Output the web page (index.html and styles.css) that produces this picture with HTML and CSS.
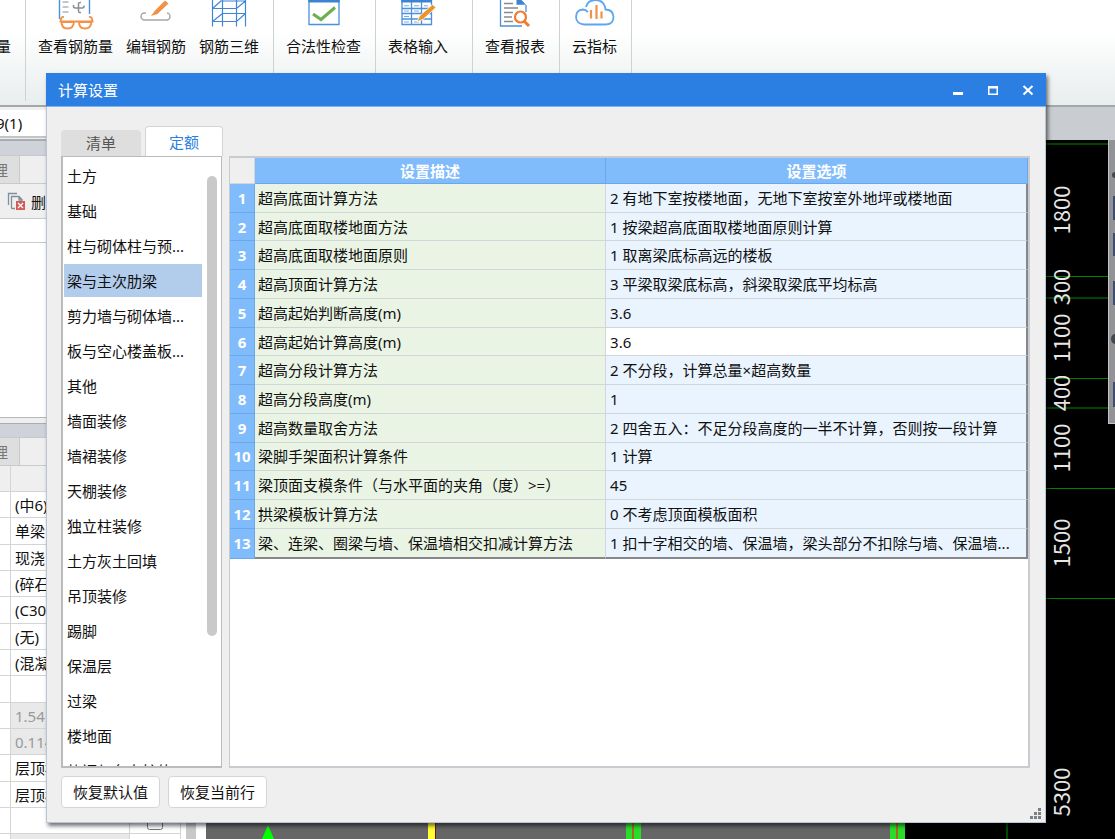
FILE: index.html
```html
<!DOCTYPE html>
<html lang="zh-CN">
<head>
<meta charset="utf-8">
<title>计算设置</title>
<link rel="stylesheet" href="styles.css">
</head>
<body>
<div class="app">
  <header class="ribbon">
    <div class="group group-first"><button class="tool"><span>量</span></button></div>
    <div class="group">
      <button class="tool">
        <svg class="tool-icon" viewBox="0 0 40 36" fill="none">
          <path d="M3.500 0V19M33.500 0V14" stroke="#4a90dd" stroke-width="1.400"/>
          <path d="M6.500 2h6M6.500 7h6M6.500 12h6" stroke="#888f96" stroke-width="1.200"/>
          <path d="M22.500 2.500V11q0 2 2.500 1.500M25 2.500q-2.500-.5-2.500 2M17.500 5v1.500q0 1.500 2 1.500h6.500q2 0 2-1.500V5.500" stroke="#888f96" stroke-width="1.500"/>
          <path d="M3.500 21.500h34M8 17q-3-1-3.500 4.500M33 17q3-1 3.500 4.500M5.500 22q0 6.500 6 6.500T18 22zM23 22q0 6.500 6 6.500T35.500 22z" stroke="#f2924a" stroke-width="1.900"/>
        </svg>
        <span>查看钢筋量</span>
      </button>
      <button class="tool">
        <svg class="tool-icon" viewBox="0 0 40 36" fill="none">
          <path d="M10 13H8.500a3.500 3.500 0 0 0 0 7H30a3.500 3.500 0 0 0 1-7" stroke="#a3a9ae" stroke-width="1.500"/>
          <path d="M15 16l3.500-5L29 .5l3.500 3L21.500 14z" fill="#f2924a"/>
        </svg>
        <span>编辑钢筋</span>
      </button>
      <button class="tool">
        <svg class="tool-icon" viewBox="0 0 40 36" fill="none" stroke="#3f86d6" stroke-width="1.200">
          <path d="M3.500 0V26.500M13.500 0V26.500M27.500 0V26.500M36.500 0V26.500M3.500 8.500H27.500L36.500 1M3.500 21.500H27.500L36.500 13.500M13.500 13.500H36.500M13.500 1H36.500M3.500 8.500l9-8M3.500 21.500l10-8"/>
        </svg>
        <span>钢筋三维</span>
      </button>
    </div>
    <div class="group">
      <button class="tool">
        <svg class="tool-icon" viewBox="0 0 40 36" fill="none">
          <path d="M5 0V24.500H35V0" stroke="#4a90dd" stroke-width="1.300"/>
          <path d="M4.300 0H35.700V2.500H4.300z" fill="#3f82cf"/>
          <path d="M9 14l8 5.500L31 7.500" stroke="#6fae4d" stroke-width="3"/>
        </svg>
        <span>合法性检查</span>
      </button>
    </div>
    <div class="group group-wide">
      <button class="tool">
        <svg class="tool-icon" viewBox="0 0 40 36" fill="none">
          <path d="M4 0V24.500H33.500V0M13.500 0V24M23.500 0V24M4 8.500H33M4 13.500H33M4 19H33" stroke="#4a90dd" stroke-width="1.300"/>
          <path d="M3.300 0H34V2.500H3.300z" fill="#3f82cf"/>
          <path d="M6 5.800h5M16 5.800h5M26 5.800h4M6 11h5M16 11h5M6 16.500h5M6 22h5M16 22h5" stroke="#78ade8"/>
          <path d="M19 22l2.500-6L34.500 4.500l3.500 3L25.500 19z" fill="#ef9227" stroke="#fff" stroke-width=".8"/>
        </svg>
        <span>表格输入</span>
      </button>
    </div>
    <div class="group">
      <button class="tool">
        <svg class="tool-icon" viewBox="0 0 40 36" fill="none">
          <path d="M5.500 0V26H27M31 5v7" stroke="#4a90dd" stroke-width="1.300"/>
          <path d="M21.500 0V4.800H31L26.500 0z" fill="#3f82cf"/>
          <path d="M9 3.500h9M9 8h14M9 12.500h9M9 17h8M9 21.500h9" stroke="#858b91" stroke-width="1.400"/>
          <circle cx="25.500" cy="17" r="5.500" fill="#fff" stroke="#f07a32" stroke-width="2.200"/>
          <path d="M29.500 21.500l4.500 4.500" stroke="#f07a32" stroke-width="3"/>
        </svg>
        <span>查看报表</span>
      </button>
    </div>
    <div class="group">
      <button class="tool">
        <svg class="tool-icon" viewBox="0 0 40 36" fill="none">
          <path d="M13 12Q10.500 9.500 8 9.500Q1 10 1 17Q1.500 24 9 24.500H31Q38.500 24 38.500 17Q38 9.500 30.500 9.500Q29.500 0 20.500 0Q13 0 11 7" stroke="#5ea6ee" stroke-width="1.800"/>
          <path d="M16 10v8.500M21.500 5v14M26.500 11.500v7" stroke="#f2924a" stroke-width="2.200"/>
        </svg>
        <span>云指标</span>
      </button>
    </div>
  </header>

  <div class="workspace">
    <aside class="side">
      <input class="combo" aria-label="构件" value="9(1)">
      <div class="band"></div>
      <div class="side-tabs"><button class="side-tab">理</button></div>
      <div class="side-tools">
        <button class="delete">
          <svg class="delete-icon" viewBox="0 0 20 20" fill="none">
            <path d="M1.500 13V1.500H10M4.500 16.500V4.500H12l3 3V9M4.500 16.500H8M12 4.500V8h3" stroke="#7f8f9b" stroke-width="1.300"/>
            <path d="M9 9h9v9H9z" fill="#d55a5a"/>
            <path d="M11 11l5 5M16 11l-5 5" stroke="#fff" stroke-width="1.200"/>
          </svg>
          <span>删</span>
        </button>
      </div>
      <div class="side-search"></div>
      <div class="side-tree"></div>
      <div class="band band-low"></div>
      <div class="side-tabs"><button class="side-tab">理</button></div>
      <div class="props">
        <div class="props-scroll">
        <table class="props-table">
          <colgroup><col class="p-mark"><col class="p-value"><col class="p-flag"></colgroup>
          <tr class="props-head"><td></td><td></td><td></td></tr>
          <tr><td></td><td>(中6)</td><td></td></tr>
          <tr><td></td><td>单梁</td><td></td></tr>
          <tr><td></td><td>现浇</td><td></td></tr>
          <tr><td></td><td>(碎石</td><td></td></tr>
          <tr><td></td><td>(C30</td><td></td></tr>
          <tr><td></td><td>(无)</td><td></td></tr>
          <tr><td></td><td>(混凝</td><td></td></tr>
          <tr><td></td><td></td><td></td></tr>
          <tr><td></td><td class="off">1.54</td><td></td></tr>
          <tr><td></td><td class="off">0.114</td><td></td></tr>
          <tr><td></td><td>层顶标</td><td></td></tr>
          <tr><td></td><td>层顶标</td><td></td></tr>
          <tr><td></td><td></td><td class="flag"><input type="checkbox" aria-label="附加"></td></tr>
          <tr><td></td><td class="off"></td><td></td></tr>
        </table>
        </div>
        <div class="props-bar"></div>
      </div>
    </aside>

    <main class="view">
      <div class="view-head"></div>
      <div class="canvas">
        <svg class="plan" width="910" height="16">
          <path d="M0 0H684V16H0z" fill="#666"/>
          <path d="M62 2l6 14H56z" fill="#00ff00"/>
          <path d="M222 0h7v16h-7z" fill="#ffff33"/><path d="M229 0h1v16h-1z" fill="#7a1010"/>
          <path d="M420 0h15v16h-15zM684 0h15v16h-15z" fill="#2bdc2b"/>
          <path d="M426 0h2v16h-2zM690 0h2v16h-2z" fill="#a06a20"/>
          <path d="M800 0h2v16h-2z" fill="#004a00"/>
        </svg>
        <svg class="axis" width="69" height="699">
          <path d="M0 4H62M0 158H62M0 268H62" stroke="#004400" stroke-width="2"/>
          <path d="M0 136.500H62M0 238.500H62M0 348.500H69M0 458.500H69" stroke="#008000"/>
          <g class="axis-text">
            <text transform="translate(24 70) rotate(-90)">1800</text>
            <text transform="translate(24 147) rotate(-90)">300</text>
            <text transform="translate(24 198) rotate(-90)">1100</text>
            <text transform="translate(24 253) rotate(-90)">400</text>
            <text transform="translate(24 308) rotate(-90)">1100</text>
            <text transform="translate(24 403) rotate(-90)">1500</text>
            <text transform="translate(24 652) rotate(-90)">5300</text>
          </g>
          <path d="M62 0h7v284h-7z" fill="#919397"/>
          <path d="M62.500 0V283.500H69" stroke="#c4c6c9" fill="none"/>
          <path d="M67 56h2v24h-2zM67 93h2v23h-2zM67 141h2v24h-2zM67 242h2v25h-2z" fill="#3e4d6b"/>
          <path d="M69 32a3 3 0 0 0 0 6M69 194a4 5 0 0 0 0 10" fill="#44484f"/>
        </svg>
      </div>
    </main>
  </div>

  <section class="dialog" role="dialog" aria-labelledby="dialog-title">
    <div class="titlebar">
      <h1 class="title" id="dialog-title">计算设置</h1>
      <button class="win" aria-label="最小化"><svg width="12" height="12"><path d="M1 8h10v3H1z" fill="#fff"/></svg></button>
      <button class="win" aria-label="最大化"><svg width="12" height="12"><path d="M1 2h10v9H1zM2.500 4.500v5h7v-5z" fill="#fff" fill-rule="evenodd"/></svg></button>
      <button class="win" aria-label="关闭"><svg width="12" height="12"><path d="M1.500 2l9 8.500M10.500 2l-9 8.500" stroke="#fff" stroke-width="2"/></svg></button>
    </div>
    <div class="dialog-body">
      <div class="tabs" role="tablist">
        <button class="tab" role="tab">清单</button>
        <button class="tab tab-on" role="tab" aria-selected="true">定额</button>
      </div>
      <div class="panes">
        <nav class="list">
          <ul class="items">
            <li><button class="item">土方</button></li>
            <li><button class="item">基础</button></li>
            <li><button class="item">柱与砌体柱与预...</button></li>
            <li><button class="item item-on">梁与主次肋梁</button></li>
            <li><button class="item">剪力墙与砌体墙...</button></li>
            <li><button class="item">板与空心楼盖板...</button></li>
            <li><button class="item">其他</button></li>
            <li><button class="item">墙面装修</button></li>
            <li><button class="item">墙裙装修</button></li>
            <li><button class="item">天棚装修</button></li>
            <li><button class="item">独立柱装修</button></li>
            <li><button class="item">土方灰土回填</button></li>
            <li><button class="item">吊顶装修</button></li>
            <li><button class="item">踢脚</button></li>
            <li><button class="item">保温层</button></li>
            <li><button class="item">过梁</button></li>
            <li><button class="item">楼地面</button></li>
            <li><button class="item">垫褥与台上桩体</button></li>
          </ul>
          <div class="track"><div class="thumb"></div></div>
        </nav>
        <div class="sheet">
          <table class="rules">
            <colgroup><col class="c-num"><col class="c-desc"><col></colgroup>
            <thead><tr><td class="corner"></td><th>设置描述</th><th>设置选项</th></tr></thead>
            <tbody>
              <tr><th>1</th><td>超高底面计算方法</td><td>2 有地下室按楼地面，无地下室按室外地坪或楼地面</td></tr>
              <tr><th>2</th><td>超高底面取楼地面方法</td><td>1 按梁超高底面取楼地面原则计算</td></tr>
              <tr><th>3</th><td>超高底面取楼地面原则</td><td>1 取离梁底标高远的楼板</td></tr>
              <tr><th>4</th><td>超高顶面计算方法</td><td>3 平梁取梁底标高，斜梁取梁底平均标高</td></tr>
              <tr><th>5</th><td>超高起始判断高度(m)</td><td>3.6</td></tr>
              <tr class="current"><th>6</th><td>超高起始计算高度(m)</td><td>3.6</td></tr>
              <tr><th>7</th><td>超高分段计算方法</td><td>2 不分段，计算总量×超高数量</td></tr>
              <tr><th>8</th><td>超高分段高度(m)</td><td>1</td></tr>
              <tr><th>9</th><td>超高数量取舍方法</td><td>2 四舍五入：不足分段高度的一半不计算，否则按一段计算</td></tr>
              <tr><th>10</th><td>梁脚手架面积计算条件</td><td>1 计算</td></tr>
              <tr><th>11</th><td>梁顶面支模条件（与水平面的夹角（度）&gt;=）</td><td>45</td></tr>
              <tr><th>12</th><td>拱梁模板计算方法</td><td>0 不考虑顶面模板面积</td></tr>
              <tr><th>13</th><td>梁、连梁、圈梁与墙、保温墙相交扣减计算方法</td><td>1 扣十字相交的墙、保温墙，梁头部分不扣除与墙、保温墙...</td></tr>
            </tbody>
          </table>
        </div>
      </div>
      <div class="actions">
        <button class="action">恢复默认值</button>
        <button class="action">恢复当前行</button>
        <svg class="grip" width="12" height="12" fill="#7b7f86"><path d="M8 0h3v3H8zM4 4h3v3H4zM8 4h3v3H8zM0 8h3v3H0zM4 8h3v3H4zM8 8h3v3H8z"/></svg>
      </div>
    </div>
  </section>
</div>
</body>
</html>
```
FILE: styles.css
```css
* { box-sizing: border-box; }

body {
  margin: 0;
  font: 15px/20px "Noto Sans", "Noto Sans CJK SC", sans-serif;
  color: #111;
}

button, input {
  margin: 0;
  padding: 0;
  border: 0;
  background: none;
  font: inherit;
  color: inherit;
}

svg { display: block; }

.app {
  position: relative;
  display: flex;
  flex-direction: column;
  height: 100vh;
  overflow: hidden;
}

/* Ribbon */
.ribbon {
  display: flex;
  flex: none;
  height: 107px;
  border-bottom: 2px solid #a4a7aa;
  background: linear-gradient(#fff 30%, #e8eded);
}

.group {
  display: flex;
  gap: 13px;
  margin-bottom: 4px;
  padding: 0 14px 0 12px;
  border-right: 1px solid #cfd2d3;
}

.group-first { width: 26px; padding: 0; }
.group-first .tool { margin-left: -4px; }
.group-wide { padding-right: 24px; }

.tool {
  display: flex;
  flex-direction: column;
  align-items: center;
  justify-content: flex-end;
  height: 56px;
  white-space: nowrap;
}

.tool-icon { width: 40px; height: 36px; }

/* Side panel */
.workspace { display: flex; flex: 1; min-height: 0; }

.side {
  display: flex;
  flex-direction: column;
  flex: none;
  width: 206px;
  padding-top: 3px;
  background: #efefef;
}

.combo {
  flex: none;
  width: 100%;
  height: 28px;
  border-bottom: 2px solid #c2c4c6;
  background: #fff;
  text-indent: -4px;
}

.band {
  flex: none;
  height: 17px;
  margin-top: 1px;
  border-top: 2px solid #a9acb0;
  border-bottom: 1px solid #c6c8cb;
  background: #d0d2d9;
}

.band-low { height: 15px; margin-top: 5px; border-top-width: 1px; }

.side-tabs {
  flex: none;
  height: 28px;
  border-bottom: 1px solid #c8cacc;
}

.side-tab {
  width: 20px;
  height: 27px;
  border-right: 1px solid #c8cacc;
  background: #dedede;
  color: #777;
  text-indent: -7px;
  text-align: left;
}

.side-tools {
  flex: none;
  height: 35px;
  padding: 6px 7px;
  border-bottom: 1px solid #c8cacc;
}

.delete { display: flex; align-items: center; gap: 4px; height: 24px; }
.delete-icon { width: 20px; height: 20px; }

.side-search {
  flex: none;
  height: 24px;
  border-bottom: 1px solid #c8cacc;
  background: #fff;
}

.side-tree {
  flex: none;
  height: 175px;
  border-bottom: 1px solid #b4b6b8;
  background: #fff;
}

.props { display: flex; flex: 1; min-height: 0; background: #fff; }
.props-scroll { width: 181px; overflow: hidden; }

.props-table {
  width: 100%;
  border-collapse: separate;
  border-spacing: 0;
  table-layout: fixed;
}

.p-mark { width: 11px; }
.p-flag { width: 51px; }

.props-table td {
  height: 26px;
  padding: 0 4px;
  border: 1px solid #d4d4d4;
  border-width: 0 1px 1px 0;
  overflow: hidden;
  white-space: nowrap;
}

.props-table tr:nth-child(3n) td { height: 27px; }
.props-head td { background: #efefef; }
.props-table .off { background: #e9e9e9; color: #999; }
.flag { text-align: center; }
.flag input { width: 16px; height: 16px; vertical-align: middle; }

.props-bar {
  flex: 1;
  margin-left: 5px;
  border-left: 10px solid #c9c9c9;
}

/* Drawing view */
.view { display: flex; flex-direction: column; flex: 1; min-width: 0; }
.view-head { flex: none; height: 33px; background: #c9ccd1; }
.canvas { position: relative; flex: 1; overflow: hidden; background: #000; }
.plan { position: absolute; left: 0; bottom: 0; }
.axis { position: absolute; right: 0; top: 0; }

.axis-text {
  fill: #e6e6e6;
  font: 22px "Noto Sans CJK SC", sans-serif;
  text-anchor: middle;
}

/* Settings dialog */
.dialog {
  position: absolute;
  inset: 73px 69px 16px 46px;
  display: flex;
  flex-direction: column;
  background: #efefef;
  box-shadow: 2px 3px 4px rgba(0, 0, 0, .55);
}

.titlebar {
  display: flex;
  flex: none;
  align-items: center;
  gap: 11px;
  height: 34px;
  padding: 0 6px 0 12px;
  border-bottom: 1px solid #7fb2ee;
  background: #2c7fe2;
  color: #fff;
}

.title { flex: 1; margin: 0; font-size: 15px; font-weight: 400; }
.win { display: flex; align-items: center; justify-content: center; width: 24px; height: 24px; }

.dialog-body {
  display: flex;
  flex-direction: column;
  flex: 1;
  min-height: 0;
  padding: 19px 15px 14px 14px;
  border: 1px solid #b9c5d3;
  border-top: 0;
}

.tabs { display: flex; flex: none; align-items: flex-end; gap: 4px; height: 30px; }

.tab {
  width: 80px;
  height: 26px;
  border-radius: 4px 4px 0 0;
  background: #dedede;
  color: #555;
}

.tab-on {
  width: 78px;
  height: 30px;
  padding-top: 1px;
  border: 1px solid #d2d4d6;
  border-bottom: 0;
  background: #fff;
  color: #2c7fe2;
}

.panes { display: flex; flex: 1; gap: 7px; min-height: 0; }

.list {
  display: flex;
  flex: none;
  gap: 5px;
  width: 161px;
  padding: 2px 4px 0 1px;
  border: 2px solid #b9bbbe;
  border-top-width: 1px;
  border-right-width: 1px;
  background: #fff;
}

.items { flex: 1; margin: 0; padding: 0; overflow: hidden; list-style: none; }
.items li { padding-bottom: 2px; }

.item {
  display: block;
  width: 100%;
  height: 33px;
  padding: 0 3px;
  text-align: left;
  white-space: nowrap;
}

.item-on { background: #b2ccec; }

.track { width: 10px; padding-top: 17px; }
.thumb { height: 78%; border-radius: 5px; background: #c9c9c9; }

.sheet {
  flex: 1;
  min-width: 0;
  border: 2px solid #c8cbd0;
  border-left-width: 1px;
  background: #fff;
}

.rules {
  width: 100%;
  height: 401px;
  border-collapse: separate;
  border-spacing: 0;
  table-layout: fixed;
}

.c-num { width: 25px; }
.c-desc { width: 44%; }

.rules td {
  padding: 0 3px;
  border-right: 1px solid #d3d6d9;
  border-bottom: 1px solid #d3d6d9;
  background: #e9f4e4;
  overflow: hidden;
  white-space: nowrap;
}

.rules td:last-child { padding-left: 4px; border-right: 2px solid #85878a; background: #e9f4ff; }
.rules .current td:last-child { background: #fff; }
.rules tbody tr:last-child td { border-bottom: 2px solid #85878a; }

.rules th {
  padding: 0;
  border-right: 1px solid #6ba8ea;
  border-bottom: 1px solid #6ba8ea;
  background: #80bbfb;
  color: #fff;
  font-weight: 700;
}

.rules thead th, .rules .corner { height: 26px; }
.rules .corner { background: #efefef; }

.actions { display: flex; flex: none; gap: 8px; margin-top: 8px; }

.action {
  width: 99px;
  height: 32px;
  border: 1px solid #d3d5d7;
  border-radius: 4px;
  background: #fff;
}

.grip { align-self: flex-end; margin: 0 -12px -12px auto; }
```
